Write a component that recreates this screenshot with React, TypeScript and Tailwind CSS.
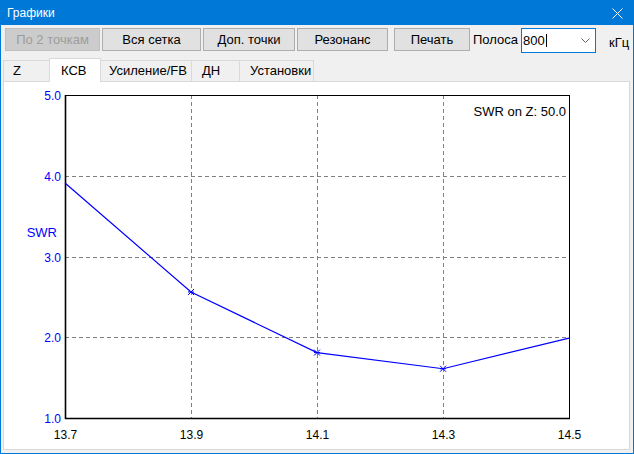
import React from 'react';

const FONT = "font-['Liberation_Sans',Arial,sans-serif]";

// chart geometry in page coordinates (svg viewBox is offset to match)
const X0 = 65;
const X1 = 569;
const Y0 = 95;
const Y1 = 418;
const xs = [13.7, 13.9, 14.1, 14.3, 14.5];
const ys = [5, 4, 3, 2, 1];
const data = [3.91, 2.56, 1.81, 1.61, 1.99];

const px = (i: number) => X0 + ((X1 - X0) / 4) * i;
const py = (v: number) => Y0 + ((Y1 - Y0) / 4) * (5 - v);

const Button: React.FC<{ w: string; disabled?: boolean; children: React.ReactNode }> = ({ w, disabled, children }) => (
    <div
        className={`${w} h-[23px] flex items-center justify-center border text-[13px] ${
            disabled ? 'bg-[#cccccc] border-[#bfbfbf] text-[#9d9d9d]' : 'bg-[#e1e1e1] border-[#adadad] text-black'
        }`}
    >
        {children}
    </div>
);

const Chart: React.FC = () => {
    const pts = data.map((v, i) => `${px(i)},${py(v)}`).join(' ');
    return (
        <svg className="absolute inset-0" width="625" height="367" viewBox="4 82 625 367">
            {/* grid */}
            {[1, 2, 3].map((i) => (
                <line key={'v' + i} x1={px(i) + 0.5} y1={Y0} x2={px(i) + 0.5} y2={Y1} stroke="#808080" strokeDasharray="4 3" />
            ))}
            {[4, 3, 2].map((v) => (
                <line key={'h' + v} x1={X0} y1={Math.round(py(v)) + 0.5} x2={X1} y2={Math.round(py(v)) + 0.5} stroke="#808080" strokeDasharray="4 3" />
            ))}
            {/* frame */}
            <rect x={X0 + 0.5} y={Y0 + 0.5} width={X1 - X0} height={Y1 - Y0} fill="none" stroke="#000" strokeWidth="1" />
            <line x1={X0 + 0.5} y1={Y0} x2={X0 + 0.5} y2={Y1 + 1} stroke="#000" strokeWidth="1.6" />
            <line x1={X0} y1={Y1 + 0.5} x2={X1 + 1} y2={Y1 + 0.5} stroke="#000" strokeWidth="1.6" />
            {/* data */}
            <polyline points={pts} fill="none" stroke="#0000ff" strokeWidth="1.2" />
            {data.slice(1, 4).map((v, j) => {
                const cx = px(j + 1);
                const cy = py(v);
                return (
                    <g key={j} stroke="#0000ff" strokeWidth="1">
                        <line x1={cx - 3} y1={cy - 3} x2={cx + 3} y2={cy + 3} />
                        <line x1={cx - 3} y1={cy + 3} x2={cx + 3} y2={cy - 3} />
                        <line x1={cx - 3} y1={cy} x2={cx + 3} y2={cy} />
                    </g>
                );
            })}
            {/* labels */}
            <g fontFamily="'Liberation Sans', Arial, sans-serif" fontSize="12">
                {ys.map((v) => (
                    <text key={v} x="61" y={Math.round(py(v)) + 5} textAnchor="end" fill="#0000ff">
                        {v.toFixed(1)}
                    </text>
                ))}
                {xs.map((v, i) => (
                    <text key={v} x={px(i) + 0.5} y="439" textAnchor="middle" fill="#000">
                        {v.toFixed(1)}
                    </text>
                ))}
            </g>
            <text x="57" y="237" textAnchor="end" fill="#0000ff" fontFamily="'Liberation Sans', Arial, sans-serif" fontSize="13">
                SWR
            </text>
            <text x="566" y="116" textAnchor="end" fill="#000" fontFamily="'Liberation Sans', Arial, sans-serif" fontSize="13">
                SWR on Z: 50.0
            </text>
        </svg>
    );
};

export default function App() {
    return (
        <div className={`w-[634px] h-[454px] border border-[#0078d7] bg-[#f0f0f0] flex flex-col ${FONT} text-black select-none`}>
            {/* Title bar */}
            <div className="h-[24px] bg-[#0078d7] flex items-center justify-between pl-[6px] pr-[10px] text-white text-[12px]">
                <span>Графики</span>
                <svg width="11" height="11" viewBox="0 0 11 11">
                    <path d="M0.5 0.5 L10.5 10.5 M10.5 0.5 L0.5 10.5" stroke="#fff" strokeWidth="1" />
                </svg>
            </div>

            {/* Toolbar */}
            <div className="flex items-start pt-[3px] pl-[4px] h-[28px]">
                <Button w="w-[95px]" disabled>По 2 точкам</Button>
                <div className="ml-[2px]"><Button w="w-[99px]">Вся сетка</Button></div>
                <div className="ml-[2px]"><Button w="w-[92px]">Доп. точки</Button></div>
                <div className="ml-[2px]"><Button w="w-[91px]">Резонанс</Button></div>
                <div className="ml-[6px]"><Button w="w-[76px]">Печать</Button></div>
                <span className="ml-[3px] h-[23px] flex items-center text-[13px]">Полоса</span>
                <div className="ml-[3px] w-[75px] h-[25px] border border-[#0078d7] bg-white flex items-center pl-px text-[13px]">
                    <span>800</span>
                    <span className="w-px h-[13px] bg-black ml-px" />
                    <svg className="ml-auto mr-[5px]" width="9" height="5" viewBox="0 0 9 5">
                        <path d="M0.5 0.5 L4.5 4.5 L8.5 0.5" fill="none" stroke="#606060" strokeWidth="1" />
                    </svg>
                </div>
                <span className="ml-[13px] h-[29px] flex items-center text-[13px]">кГц</span>
            </div>

            {/* Tabs */}
            <div className="mt-[5px] h-[23px] flex items-end pl-[2px] text-[13px]">
                <div className="w-[46px] h-[21px] border-l border-t border-[#d9d9d9] pl-[9px] flex items-center">Z</div>
                <div className="relative z-10 w-[52px] h-[24px] -mb-px bg-white border-l border-t border-r border-[#d9d9d9] pl-[11px] flex items-center">КСВ</div>
                <div className="w-[91px] h-[21px] border-t border-r border-[#d9d9d9] pl-[8px] flex items-center">Усиление/FB</div>
                <div className="w-[48px] h-[21px] border-t border-r border-[#d9d9d9] pl-[10px] flex items-center">ДН</div>
                <div className="w-[74px] h-[21px] border-t border-r border-[#d9d9d9] pl-[10px] flex items-center">Установки</div>
            </div>

            {/* Panel */}
            <div className="relative flex-1 ml-[2px] mr-[3px] mb-[3px] bg-white border border-[#d9d9d9]">
                <Chart />
            </div>
        </div>
    );
}
